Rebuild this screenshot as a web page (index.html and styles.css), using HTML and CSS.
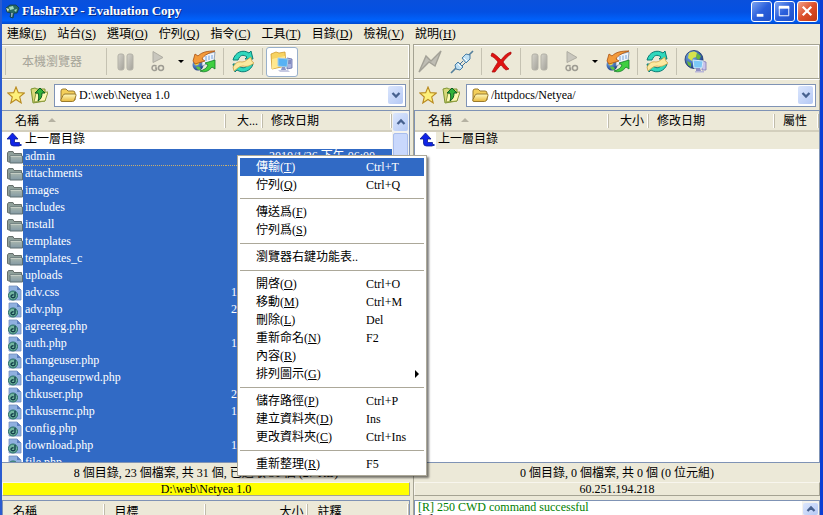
FILE: index.html
```html
<!DOCTYPE html>
<html lang="zh-Hant">
<head>
<meta charset="utf-8">
<title>FlashFXP - Evaluation Copy</title>
<link rel="stylesheet" href="styles.css">
</head>
<body>
<svg class="sprite" aria-hidden="true">
  <defs>
    <linearGradient id="gFolder" x1="0" y1="0" x2="0" y2="1"><stop offset="0" stop-color="#fffbc0"/><stop offset="1" stop-color="#e9b93c"/></linearGradient>
    <linearGradient id="gGrayFolder" x1="0" y1="0" x2="0" y2="1"><stop offset="0" stop-color="#a9b7ae"/><stop offset="1" stop-color="#8399a4"/></linearGradient>
    <linearGradient id="gGray" x1="0" y1="0" x2="1" y2="1"><stop offset="0" stop-color="#d6d4cb"/><stop offset="1" stop-color="#a3a199"/></linearGradient>
    <radialGradient id="gGlobe" cx=".35" cy=".3" r=".8"><stop offset="0" stop-color="#7fb4f0"/><stop offset="1" stop-color="#10307c"/></radialGradient>
  </defs>
  <symbol id="i-app" viewBox="0 0 16 16">
    <path d="M2 5 6 2l6 0 3 3-2 5-3 0-1 5-3-1 1-4-4-1z" fill="#2a6b62" stroke="#123d45" stroke-width=".8"/>
    <path d="M5 4l4-1 1 3-4 1zM10 7l3-1-1 3z" fill="#9fd8c0"/><path d="M2 5l3 1-1 3z" fill="#dfe7c0"/>
    <path d="M7 10l2 0-1 4-1 0z" fill="#8ba6b8"/>
  </symbol>
  <symbol id="i-pause" viewBox="0 0 24 24">
    <rect x="4" y="4" width="6" height="16" rx="2" fill="url(#gGray)" stroke="#b3b1a7"/>
    <rect x="13" y="4" width="6" height="16" rx="2" fill="url(#gGray)" stroke="#b3b1a7"/>
  </symbol>
  <symbol id="i-go" viewBox="0 0 24 24">
    <path d="M7 1.500 17 7.500 7 12.500z" fill="#c9c7be" stroke="#aeaca2"/>
    <g fill="none" stroke="#9d9b92" stroke-width="1.500"><path d="M10.500 16.500c-1-1.500-4.500-1.500-4.500 1.500s3.500 3 4.500 1.500v-1.500H9"/><ellipse cx="15" cy="18" rx="2.500" ry="2.400"/></g>
  </symbol>
  <symbol id="i-transfer" viewBox="0 0 24 24">
    <circle cx="6" cy="15" r="5.500" fill="url(#gGlobe)"/>
    <path d="M2 12c2-2 4-2 5 0s-2 4-4 3z" fill="#e9d94a"/><path d="M4 17c3-1 4 0 5 2-2 2-4 1-5-2z" fill="#5bbf4a"/>
    <path d="M10 5l13-3-1 9-12 5z" fill="#eef3fa" stroke="#8094ac" stroke-width=".8"/><path d="M14 6v5M17 5.500v4.500M20 5v4" stroke="#6ea0dc"/>
    <path d="M1 11 3 4l3 2c4-4 9-5 17-5-6 2-11 4-13 8l3 2-10 3z" fill="#f39a3a" stroke="#a85010" stroke-width=".8"/>
    <path d="M23 10l0 9-3-2c-3 4-7 6-12 4 4-1 7-3 8-6l-3-2z" fill="#3fd040" stroke="#127a28" stroke-width=".8"/>
  </symbol>
  <symbol id="i-refresh" viewBox="0 0 24 24">
    <path d="M2 2.500C3 3 12-1 18 4" fill="none"/>
    <path d="M2 10C4 2 12-1 18 3l2-2 2 8-8 0 2-2c-4-3-7-2-9 3z" fill="#2fd8bd" stroke="#0b7c74"/>
    <path d="M22 14c-2 7-10 10-16 6l-2 2-2-8 8 0-2 2c4 3 7 2 9-2z" fill="#2fd8bd" stroke="#0b7c74"/>
    <path d="M2 17c2-3 4-6 9-5 4 0 5-3 9-5 0 3 1 5 3 6-4 3-7 4-11 3-4 0-6 3-9 5z" fill="#fbe9a0" stroke="#c99a3a" stroke-width=".7"/>
  </symbol>
  <symbol id="i-local" viewBox="0 0 24 24">
    <path d="M1 4 6 2l3 1 6-1 1 14-14 3z" fill="#f7d362" stroke="#d09a2c" stroke-width=".8"/><path d="M2 9l13-3 0 9-13 4z" fill="#ffe890"/>
    <path d="M17 8l5 1v9l-5 1z" fill="#a9b2de" stroke="#656fa8" stroke-width=".8"/><path d="M18 11h3M18 13h3" stroke="#5c66a0"/>
    <path d="M8 8l10 1-1 8-9-1z" fill="#57b2f4" stroke="#a5cde8"/><path d="M12 17l3 0 1 3-5 0z" fill="#8a95c6"/><path d="M8 20l10 0 2 2-10 0z" fill="#c5c9e2"/>
  </symbol>
  <symbol id="i-globe" viewBox="0 0 24 24">
    <circle cx="10" cy="9.500" r="9" fill="url(#gGlobe)" stroke="#14326a" stroke-width=".8"/>
    <path d="M5 3c3-2 6-2 8 0l-1 4-3 1-1 3-4-3z" fill="#d7e34c"/><path d="M13 3l4 3-2 4-3-2zM3 11l4 2 0 4-3-2z" fill="#67b53e"/>
    <path d="M18 11l4 1v8l-4 0z" fill="#c9c4ea" stroke="#7f79b5" stroke-width=".8"/>
    <path d="M9 10l10 1-1 7-8 0z" fill="#7cc8f6" stroke="#d9ecf8"/><path d="M12 18l4 0 1 3-5 0z" fill="#8f8fc4"/><path d="M11 21h9v1.500h-9z" fill="#b9b6d8"/>
  </symbol>
  <symbol id="i-bolt" viewBox="0 0 24 24">
    <path d="M1 22 8 6l5 5L23 1l-6 15-6-4z" fill="#bfbdb4" stroke="#a3a197" stroke-width="1.400"/>
  </symbol>
  <symbol id="i-plug" viewBox="0 0 24 24">
    <path d="M1 23 7 17M17 7l6-6" stroke="#54809c" stroke-width="1.600"/>
    <path d="M5 15l3-3 5 5-3 3-4-1z" fill="#bfe0f3" stroke="#487da5"/><path d="M12 8l4-4 4 1 0 4-4 4z" fill="#bfe0f3" stroke="#487da5"/>
    <path d="M10 14l3-3M12 16l3-3" stroke="#3e6f9a"/><path d="M14 8l3 3M8 14l3 3" stroke="#fff"/>
  </symbol>
  <symbol id="i-cancel" viewBox="0 0 24 24">
    <path d="M3 3c3 1 6 4 9 7 3-4 6-7 10-8l0 2c-3 2-6 5-8 8 2 3 4 5 6 7l-3 1c-2-1-3-3-5-5-2 2-4 4-6 7l-3 0c2-4 4-7 6-10-3-4-5-5-7-6z" fill="#e01212" stroke="#a50808" stroke-width=".7"/>
  </symbol>
  <symbol id="i-star" viewBox="0 0 18 18">
    <path d="M9 1l2.300 5.600 6 .4-4.600 3.900 1.500 6L9 13.500 3.800 17l1.500-6L.7 7l6-.4z" fill="#fdf07a" stroke="#b98a20" stroke-width="1.100"/>
  </symbol>
  <symbol id="i-folderup" viewBox="0 0 18 18">
    <path d="M1 3l4-1 2 1 8 0 0 12-12 2z" fill="#d8d878" stroke="#7b9431"/><path d="M4 16l2-9 12-1-3 9z" fill="#fdf8b4" stroke="#8c9a3c"/>
    <path d="M10 2l5 5-3 0c0 4-1 6-4 8 1-3 1-5 0-8l-3 0z" fill="#31b23a" stroke="#0c5c22"/>
  </symbol>
  <symbol id="i-folder" viewBox="0 0 18 18">
    <path d="M2 14V5q0-2 2-2h3l2 2h5q2 0 2 2v7z" fill="#f4cf5a" stroke="#9a7a2c"/><path d="M3 15.500q-2 0-1-2l2-4q.5-1.500 2-1.500h10q1.500 0 1 1.500l-1.500 4.500q-.5 1.500-2 1.500z" fill="url(#gFolder)" stroke="#9a7a2c"/>
  </symbol>
  <symbol id="i-dir" viewBox="0 0 16 16">
    <path d="M.5 12.500V4l1-1.500h4.500l1 2h7.500v8.500H2z" fill="#8fa09a" stroke="#67706c"/>
    <path d="M3 14V7h12.500v7z" fill="url(#gGrayFolder)" stroke="#5e6e70"/><path d="M3.500 7.500h11" stroke="#c4cdc4"/>
  </symbol>
  <symbol id="i-file" viewBox="0 0 16 16">
    <path d="M2 1h8l4 4v10H2z" fill="#8fb0df" stroke="#7391bf" stroke-width=".8"/><path d="M10 1v4h4z" fill="#5c7fc0"/>
    <circle cx="6" cy="10.500" r="4.500" fill="#72b59f" stroke="#236a63"/><path d="M8 7v4a2 1.500 0 1 1-1.500-1.200" fill="none" stroke="#123f4a" stroke-width="1.400"/>
  </symbol>
  <symbol id="i-up" viewBox="0 0 18 16">
    <path d="M5.500 1 11 7H7.500v3.500h5V14h-6q-3 0-3-3V7H0z" fill="#1024e8" stroke="#0a1a90" stroke-width=".8"/><path d="M13 12h1.500v2H13zM16 12h1.500v2H16z" fill="#1430b0"/>
  </symbol>
  <symbol id="i-chev" viewBox="0 0 10 10"><path d="M1.500 3 5 6.500 8.500 3" fill="none" stroke="#47618f" stroke-width="2.300"/></symbol>
</svg>

<div class="window">
  <header class="titlebar">
    <svg class="ico16"><use href="#i-app"/></svg>
    <h1>FlashFXP - Evaluation Copy</h1>
    <button class="winbtn" aria-label="最小化"><svg viewBox="0 0 20 20"><path d="M5 14h7" stroke="#fff" stroke-width="3"/></svg></button>
    <button class="winbtn" aria-label="最大化"><svg viewBox="0 0 20 20"><path d="M4.500 5.500h10v9h-10z" fill="none" stroke="#fff"/><path d="M4 5.500h11" stroke="#fff" stroke-width="3"/></svg></button>
    <button class="winbtn close" aria-label="關閉"><svg viewBox="0 0 20 20"><path d="M5 5l9 9M14 5l-9 9" stroke="#fff" stroke-width="2.300"/></svg></button>
  </header>

  <nav class="menubar">
    <button>連線(<u>E</u>)</button><button>站台(<u>S</u>)</button><button>選項(<u>O</u>)</button><button>佇列(<u>Q</u>)</button><button>指令(<u>C</u>)</button><button>工具(<u>T</u>)</button><button>目錄(<u>D</u>)</button><button>檢視(<u>V</u>)</button><button>說明(<u>H</u>)</button>
  </nav>

  <main class="panes">
    <section class="pane">
      <div class="toolbar">
        <span class="sep"></span>
        <button class="source" disabled>本機瀏覽器</button>
        <span class="sep"></span>
        <button class="tool" aria-label="暫停"><svg><use href="#i-pause"/></svg></button>
        <button class="tool" aria-label="執行"><svg><use href="#i-go"/></svg></button>
        <button class="drop" aria-label="更多"></button>
        <button class="tool" aria-label="傳輸"><svg><use href="#i-transfer"/></svg></button>
        <span class="sep"></span>
        <button class="tool" aria-label="重新整理"><svg><use href="#i-refresh"/></svg></button>
        <span class="sep"></span>
        <button class="tool pressed" aria-label="本機"><svg><use href="#i-local"/></svg></button>
      </div>
      <div class="address">
        <button class="small" aria-label="我的最愛"><svg><use href="#i-star"/></svg></button>
        <button class="small" aria-label="上一層"><svg><use href="#i-folderup"/></svg></button>
        <div class="combo">
          <svg class="ico18"><use href="#i-folder"/></svg>
          <select aria-label="本機路徑"><option>D:\web\Netyea 1.0</option></select>
          <span class="xpbtn"><svg><use href="#i-chev"/></svg></span>
        </div>
      </div>
      <div class="listbox">
        <div class="scroller">
          <table class="files">
            <colgroup><col class="c-icon"><col><col class="c-size"><col class="c-date"></colgroup>
            <thead><tr><th colspan="2" class="first">名稱<i class="sort"></i></th><th class="num">大...</th><th>修改日期</th></tr></thead>
            <tbody>
              <tr><td><svg class="up"><use href="#i-up"/></svg></td><td>上一層目錄</td><td></td><td></td></tr>
              <tr class="sel focus"><td><svg><use href="#i-dir"/></svg></td><td>admin</td><td></td><td>2010/1/26 下午 06:00</td></tr>
              <tr class="sel"><td><svg><use href="#i-dir"/></svg></td><td>attachments</td><td></td><td></td></tr>
              <tr class="sel"><td><svg><use href="#i-dir"/></svg></td><td>images</td><td></td><td></td></tr>
              <tr class="sel"><td><svg><use href="#i-dir"/></svg></td><td>includes</td><td></td><td></td></tr>
              <tr class="sel"><td><svg><use href="#i-dir"/></svg></td><td>install</td><td></td><td></td></tr>
              <tr class="sel"><td><svg><use href="#i-dir"/></svg></td><td>templates</td><td></td><td></td></tr>
              <tr class="sel"><td><svg><use href="#i-dir"/></svg></td><td>templates_c</td><td></td><td></td></tr>
              <tr class="sel"><td><svg><use href="#i-dir"/></svg></td><td>uploads</td><td></td><td></td></tr>
              <tr class="sel"><td><svg><use href="#i-file"/></svg></td><td>adv.css</td><td>1,024</td><td></td></tr>
              <tr class="sel"><td><svg><use href="#i-file"/></svg></td><td>adv.php</td><td>2,048</td><td></td></tr>
              <tr class="sel"><td><svg><use href="#i-file"/></svg></td><td>agreereg.php</td><td></td><td></td></tr>
              <tr class="sel"><td><svg><use href="#i-file"/></svg></td><td>auth.php</td><td>1,024</td><td></td></tr>
              <tr class="sel"><td><svg><use href="#i-file"/></svg></td><td>changeuser.php</td><td></td><td></td></tr>
              <tr class="sel"><td><svg><use href="#i-file"/></svg></td><td>changeuserpwd.php</td><td></td><td></td></tr>
              <tr class="sel"><td><svg><use href="#i-file"/></svg></td><td>chkuser.php</td><td>2,048</td><td></td></tr>
              <tr class="sel"><td><svg><use href="#i-file"/></svg></td><td>chkusernc.php</td><td>1,024</td><td></td></tr>
              <tr class="sel"><td><svg><use href="#i-file"/></svg></td><td>config.php</td><td></td><td></td></tr>
              <tr class="sel"><td><svg><use href="#i-file"/></svg></td><td>download.php</td><td>1,024</td><td></td></tr>
              <tr class="sel"><td><svg><use href="#i-file"/></svg></td><td>file.php</td><td></td><td></td></tr>
            </tbody>
          </table>
        </div>
        <div class="scrollbar"><span class="xpbtn flip"><svg><use href="#i-chev"/></svg></span><span class="thumb"></span></div>
      </div>
      <div class="status">8 個目錄, 23 個檔案, 共 31 個, 已選取 31 個 (27 KB)</div>
      <div class="where local">D:\web\Netyea 1.0</div>
      <div class="bottom">
        <table class="queue">
          <colgroup><col class="q-name"><col class="q-target"><col class="q-size"><col></colgroup>
          <thead><tr><th>名稱</th><th>目標</th><th class="num">大小</th><th>註釋</th></tr></thead>
        </table>
      </div>
    </section>

    <section class="pane">
      <div class="toolbar">
        <button class="tool" aria-label="連線"><svg><use href="#i-bolt"/></svg></button>
        <button class="tool" aria-label="中斷"><svg><use href="#i-plug"/></svg></button>
        <span class="sep"></span>
        <button class="tool" aria-label="取消"><svg><use href="#i-cancel"/></svg></button>
        <span class="sep"></span>
        <button class="tool" aria-label="暫停"><svg><use href="#i-pause"/></svg></button>
        <button class="tool" aria-label="執行"><svg><use href="#i-go"/></svg></button>
        <button class="drop" aria-label="更多"></button>
        <button class="tool" aria-label="傳輸"><svg><use href="#i-transfer"/></svg></button>
        <span class="sep"></span>
        <button class="tool" aria-label="重新整理"><svg><use href="#i-refresh"/></svg></button>
        <span class="sep"></span>
        <button class="tool" aria-label="遠端"><svg><use href="#i-globe"/></svg></button>
      </div>
      <div class="address">
        <button class="small" aria-label="我的最愛"><svg><use href="#i-star"/></svg></button>
        <button class="small" aria-label="上一層"><svg><use href="#i-folderup"/></svg></button>
        <div class="combo">
          <svg class="ico18"><use href="#i-folder"/></svg>
          <select aria-label="遠端路徑"><option>/httpdocs/Netyea/</option></select>
          <span class="xpbtn"><svg><use href="#i-chev"/></svg></span>
        </div>
      </div>
      <div class="listbox">
        <div class="scroller">
          <table class="files">
            <colgroup><col class="c-icon"><col><col class="c-rsize"><col class="c-rdate"><col class="c-attr"></colgroup>
            <thead><tr><th colspan="2" class="first">名稱<i class="sort"></i></th><th class="num">大小</th><th>修改日期</th><th>屬性</th></tr></thead>
            <tbody><tr class="idle"><td><svg class="up"><use href="#i-up"/></svg></td><td>上一層目錄</td><td></td><td></td><td></td></tr></tbody>
          </table>
        </div>
      </div>
      <div class="status">0 個目錄, 0 個檔案, 共 0 個 (0 位元組)</div>
      <div class="where">60.251.194.218</div>
      <div class="bottom">
        <div class="log"><p class="reply">[R] 250 CWD command successful</p><p>[L] PWD</p></div>
        <div class="scrollbar"><span class="xpbtn flip"><svg><use href="#i-chev"/></svg></span></div>
      </div>
    </section>
  </main>

  <ul class="context" role="menu">
    <li><button class="active"><span>傳輸(<u>T</u>)</span><kbd>Ctrl+T</kbd></button></li>
    <li><button><span>佇列(<u>Q</u>)</span><kbd>Ctrl+Q</kbd></button></li>
    <li class="rule"></li>
    <li><button><span>傳送爲(<u>F</u>)</span></button></li>
    <li><button><span>佇列爲(<u>S</u>)</span></button></li>
    <li class="rule"></li>
    <li><button><span>瀏覽器右鍵功能表..</span></button></li>
    <li class="rule"></li>
    <li><button><span>開啓(<u>O</u>)</span><kbd>Ctrl+O</kbd></button></li>
    <li><button><span>移動(<u>M</u>)</span><kbd>Ctrl+M</kbd></button></li>
    <li><button><span>刪除(<u>L</u>)</span><kbd>Del</kbd></button></li>
    <li><button><span>重新命名(<u>N</u>)</span><kbd>F2</kbd></button></li>
    <li><button><span>內容(<u>R</u>)</span></button></li>
    <li><button class="sub"><span>排列圖示(<u>G</u>)</span></button></li>
    <li class="rule"></li>
    <li><button><span>儲存路徑(<u>P</u>)</span><kbd>Ctrl+P</kbd></button></li>
    <li><button><span>建立資料夾(<u>D</u>)</span><kbd>Ins</kbd></button></li>
    <li><button><span>更改資料夾(<u>C</u>)</span><kbd>Ctrl+Ins</kbd></button></li>
    <li class="rule"></li>
    <li><button><span>重新整理(<u>R</u>)</span><kbd>F5</kbd></button></li>
  </ul>
</div>
</body>
</html>
```
FILE: styles.css
```css
:root {
  --face: #ece9d8;
  --line: #a5a393;
  --edge: #7f93b5;
  --select: #316ac5;
}

* { box-sizing: border-box; }

body {
  margin: 0;
  font: 12px/16px "Liberation Serif", "Noto Sans CJK TC", serif;
  color: #000;
  background: var(--face);
}

button, select {
  margin: 0;
  padding: 0;
  border: 0;
  background: none;
  font: inherit;
  color: inherit;
}

button svg, .xpbtn svg, td svg { display: block; }
.sprite { position: absolute; width: 0; height: 0; }

.window {
  position: relative;
  display: flex;
  flex-direction: column;
  height: 100vh;
  overflow: hidden;
  border-left: 2px solid #2a5bd0;
  border-right: 3px solid #0a3fd4;
}

/* Title bar */
.titlebar {
  display: flex;
  align-items: center;
  gap: 2px;
  flex: none;
  height: 24px;
  margin: 0 -3px 0 -2px;
  padding: 0 5px 2px 4px;
  background: linear-gradient(#0a50dc, #0450e2 50%, #0062fc 85%, #0048cc);
}
.titlebar h1 {
  flex: 1;
  margin: 0;
  font-size: 13px;
  font-weight: bold;
  color: #fff;
  text-shadow: 1px 1px #0a2a80;
}
.ico16 { width: 16px; height: 16px; }
.ico18 { width: 18px; height: 18px; }
.winbtn {
  width: 21px;
  height: 21px;
  border: 1px solid #fff;
  border-radius: 3px;
  background: linear-gradient(135deg, #7ea4f0, #2a5fdc 50%, #1f50c8);
}
.winbtn.close { background: linear-gradient(135deg, #f0a088, #dc4f2a 50%, #c03a14); }

/* Menu bar */
.menubar {
  display: flex;
  flex: none;
  gap: 11px;
  height: 20px;
  padding: 2px 5px;
}

/* Panes */
.panes {
  display: grid;
  grid-template-columns: 408fr 406fr;
  gap: 4px;
  flex: 1;
  min-height: 0;
}
.pane {
  display: flex;
  flex-direction: column;
  min-width: 0;
  min-height: 0;
}
.pane + .pane { box-shadow: -1px 0 var(--line); }

.toolbar {
  display: flex;
  align-items: center;
  flex: none;
  height: 35px;
  border-top: 1px solid var(--line);
  border-right: 1px solid var(--line);
  border-bottom: 1px solid var(--line);
  box-shadow: inset 0 1px #fff, inset -1px 0 #fff;
}
.sep {
  width: 1px;
  height: 27px;
  margin: 0 3px;
  background: #c5c2b2;
}
.source {
  width: 94px;
  padding-left: 13px;
  text-align: left;
  color: #a6a498;
}
.tool {
  display: grid;
  place-items: center;
  width: 32px;
  height: 30px;
}
.tool svg { width: 24px; height: 24px; }
.tool.pressed {
  border: 1px solid #98b0cc;
  border-radius: 3px;
  background: #fff;
}
.drop { width: 14px; height: 30px; }
.drop::before {
  content: "";
  display: block;
  margin: 0 auto;
  width: 0;
  border: 3px solid transparent;
  border-top-color: #000;
  border-bottom: 0;
}

.address {
  display: flex;
  align-items: center;
  flex: none;
  gap: 4px;
  height: 31px;
  padding-left: 5px;
  border-top: 1px solid #fff;
  border-right: 1px solid var(--line);
}
.small { width: 19px; height: 20px; }
.small svg { width: 18px; height: 18px; }
.combo {
  display: flex;
  align-items: center;
  flex: 1;
  height: 23px;
  margin: 0 3px 0 1px;
  padding: 0 2px 0 4px;
  border: 1px solid var(--edge);
  background: #fff;
}
.combo select {
  flex: 1;
  min-width: 0;
  height: 18px;
  padding-left: 2px;
  appearance: none;
  outline: 0;
}
.xpbtn {
  display: grid;
  place-items: center;
  width: 15px;
  height: 18px;
  border-radius: 2px;
  background: linear-gradient(135deg, #dbe6fd, #b5c9f5);
}
.xpbtn svg { width: 10px; height: 10px; }
.flip svg { transform: rotate(180deg); }

/* File lists */
.listbox {
  display: flex;
  flex: 1;
  min-height: 0;
  border: 1px solid var(--edge);
  border-left: 0;
  background: #fff;
}
.scroller { flex: 1; min-width: 0; overflow: hidden; }
.pane + .pane .listbox { border-left: 1px solid var(--edge); }
.scrollbar {
  display: flex;
  flex-direction: column;
  align-items: center;
  width: 17px;
  padding-top: 2px;
  background: #f4f3ee;
}
.thumb {
  flex: 1;
  width: 15px;
  margin: 2px 0 20px;
  border: 1px solid #a9bdec;
  border-radius: 2px;
  background: #c9d8fc;
}

table {
  width: 100%;
  table-layout: fixed;
  border-collapse: separate;
  border-spacing: 0;
  white-space: nowrap;
}
th {
  height: 21px;
  padding: 1px 8px 0;
  text-align: left;
  font-weight: normal;
  background: linear-gradient(to left, #c0bcab 1px, #fff 1px, #fff 2px, transparent 2px) right / 2px 14px no-repeat, var(--face);
  border-bottom: 2px solid #d3cfbd;
}
th.first { padding-left: 13px; }
th.num { padding: 1px 5px 0; text-align: right; }
td {
  height: 17px;
  padding: 0 2px;
  line-height: 15px;
  vertical-align: top;
  overflow: hidden;
}
.files td:nth-child(1) { padding: 0 0 0 5px; }
.files td:nth-child(3) { padding-right: 5px; text-align: right; }
.files td:nth-child(4) { padding-left: 6px; }
td svg { width: 16px; height: 16px; }
td svg.up { width: 18px; height: 16px; }
.c-icon { width: 21px; }
.c-size { width: 37px; }
.c-date { width: 129px; }
.c-rsize { width: 40px; }
.c-rdate { width: 126px; }
.c-attr { width: 44px; }
.sort {
  display: inline-block;
  margin: 0 0 3px 9px;
  border: 4px solid transparent;
  border-top: 0;
  border-bottom-color: #b5b2a3;
}
.sel td + td { color: #fff; background: var(--select); }
.idle td + td { background: var(--face); }
.focus td + td { border-bottom: 1px dotted #c8b070; }

/* Footer rows */
.status {
  flex: none;
  height: 19px;
  padding-top: 2px;
  text-align: center;
}
.where {
  flex: none;
  height: 14px;
  line-height: 13px;
  text-align: center;
  border: 1px solid;
  border-color: #f8f6ee var(--line) var(--line) #f8f6ee;
}
.where.local { background: #ff0; }

.bottom {
  display: flex;
  flex: none;
  height: 15px;
  margin-top: 4px;
  overflow: hidden;
  border: 1px solid var(--edge);
  border-bottom: 0;
}
.queue th { padding: 2px 10px 0; }
.queue th.num { padding: 2px 4px 0; }
.q-name, .q-target, .q-size { width: 25%; }
.log {
  flex: 1;
  padding-left: 3px;
  background: #fff;
}
.log p { margin: 0; line-height: 12px; }
.log .reply { color: #008000; }

/* Context menu */
.context {
  position: absolute;
  top: 155px;
  left: 235px;
  width: 190px;
  margin: 0;
  padding: 2px;
  list-style: none;
  border: 1px solid #aca899;
  background: #fff;
  box-shadow: 2px 2px 2px rgba(0, 0, 0, .5);
}
.context button {
  display: grid;
  grid-template-columns: 110px 1fr;
  align-items: center;
  width: 100%;
  height: 18px;
  padding-left: 16px;
  text-align: left;
}
.context kbd { font: inherit; }
.context .active { color: #fff; background: var(--select); }
.context .sub::after {
  content: "";
  justify-self: end;
  margin-right: 5px;
  border: 4px solid transparent;
  border-left-color: #000;
  border-right: 0;
}
.rule {
  height: 9px;
  padding-top: 4px;
}
.rule::before {
  content: "";
  display: block;
  border-top: 1px solid #aca899;
}
```
